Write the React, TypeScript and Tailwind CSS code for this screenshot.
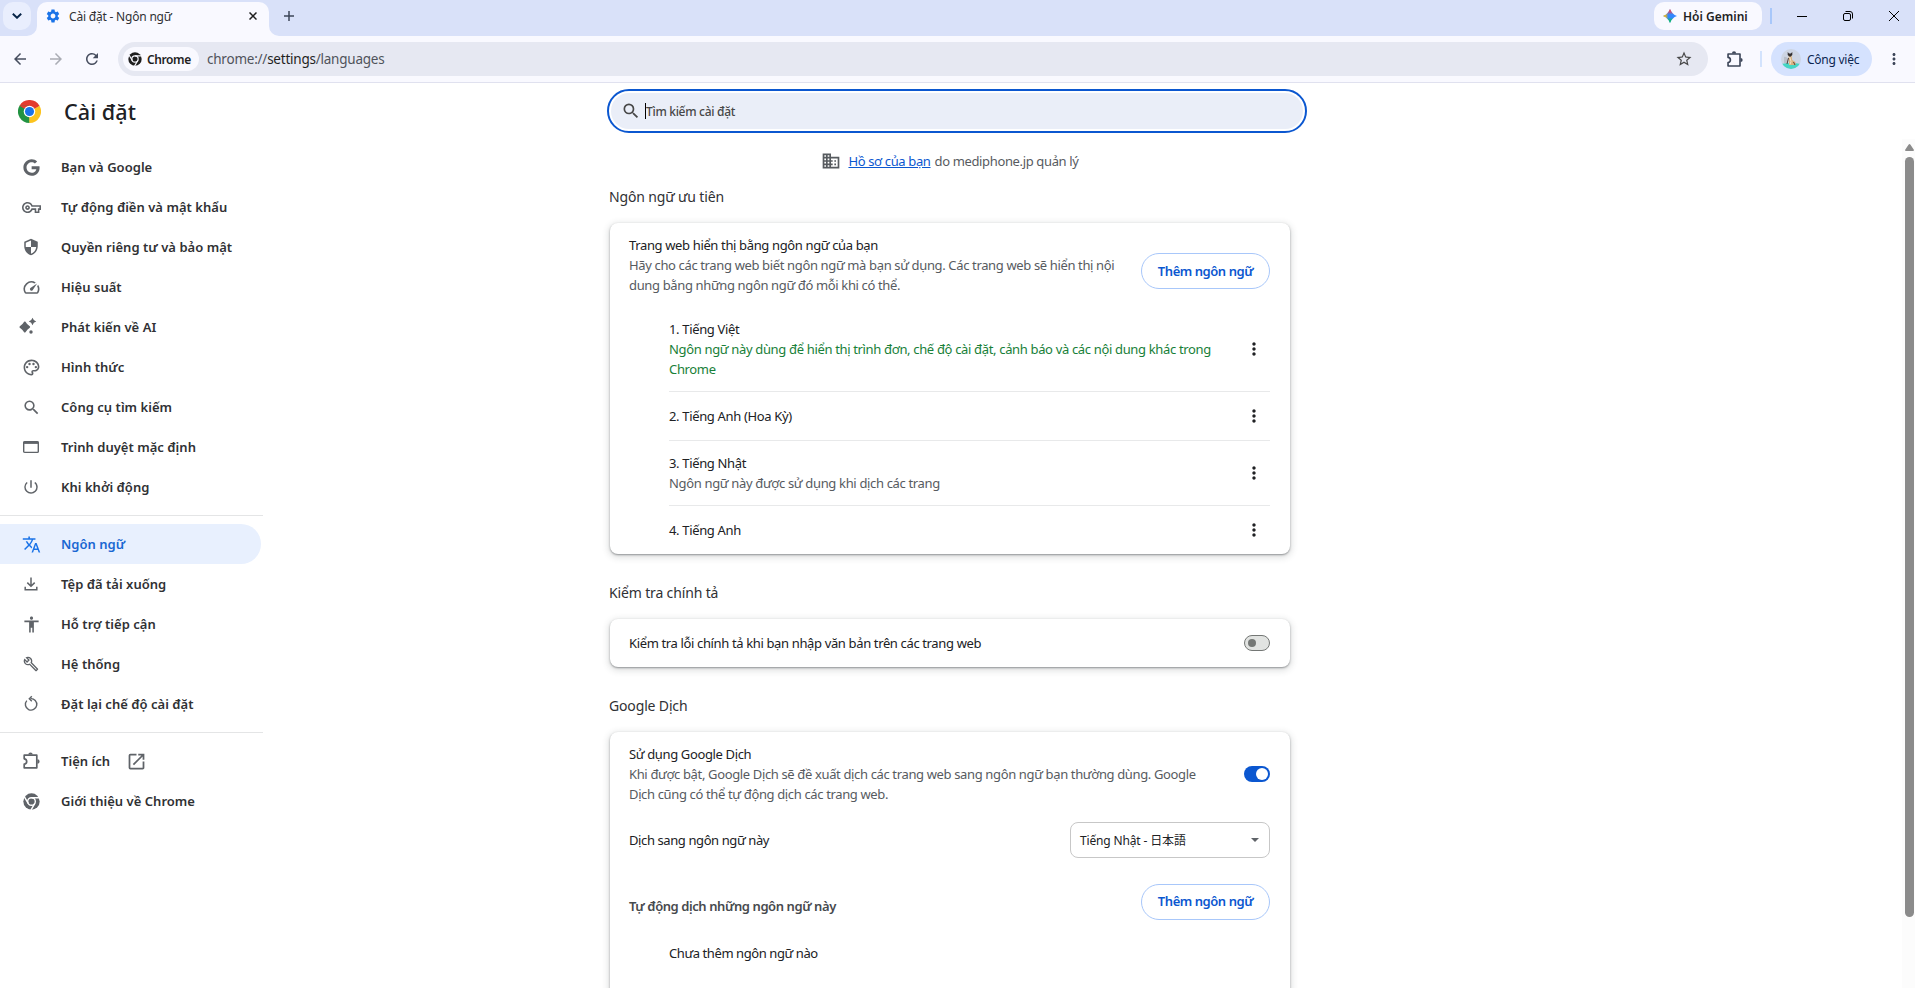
import React from 'react';
import {
    MdAccessibility,
    MdArrowBack,
    MdArrowForward,
    MdDomain,
    MdMoreVert,
    MdOpenInNew,
    MdOutlineBuild,
    MdOutlinePalette,
    MdOutlineSpeed,
    MdOutlineVpnKey,
    MdPowerSettingsNew,
    MdRefresh,
    MdSearch,
    MdSecurity,
    MdSettings,
    MdStarBorder,
    MdTranslate,
} from 'react-icons/md';
import {FaGoogle} from 'react-icons/fa';

const ChromeMono = ({className, gap}: { className: string, gap: string }) => (
    <svg viewBox="0 0 24 24" className={className}>
        <circle cx="12" cy="12" r="11.5" fill="currentColor"/>
        <g stroke={gap} strokeWidth="2" fill="none">
            <circle cx="12" cy="12" r="5.4"/>
            <path d="M12 6.6h11M7.3 14.7L1.8 5.2M16.7 14.7l-5.5 9.5"/>
        </g>
    </svg>
)

const ChromeColor = () => (
    <svg viewBox="0 0 48 48" className="w-[23px] h-[23px]">
        <path d="M24 24L3.2 12A24 24 0 0 1 44.8 12z" fill="#e33b2e"/>
        <path d="M24 24L44.8 12A24 24 0 0 1 24 48z" fill="#fcc31e"/>
        <path d="M24 24L24 48A24 24 0 0 1 3.2 12z" fill="#229342"/>
        <path d="M24 12h20.8L34 18z" fill="#e33b2e"/>
        <path d="M3.2 12l10.4 18L24 12z" fill="#229342"/>
        <path d="M3.2 12L13.6 18 24 12z" fill="#e33b2e"/>
        <path d="M34.4 30L24 48V30z" fill="#fcc31e"/>
        <circle cx="24" cy="24" r="12" fill="#fff"/>
        <circle cx="24" cy="24" r="9.5" fill="#1a73e8"/>
    </svg>
)

const Puzzle = ({className}: { className: string }) => (
    <svg viewBox="0 0 20 20" className={className} fill="none" stroke="currentColor" strokeWidth="1.7">
        <path d="M3.2 4.2h12.6v12.6H3.2v-3.6c1.6-.2 2.5-1.3 2.5-2.7S4.8 8 3.2 7.8z" strokeLinejoin="round"/>
        <path d="M7.3 3.6a2.2 2.2 0 0 1 4.4 0zM16.4 8.3a2.2 2.2 0 0 1 0 4.4z" fill="currentColor"
              stroke="none"/>
    </svg>
)

const Download = () => (
    <svg viewBox="0 0 20 20" className="w-5 h-5" fill="none" stroke="currentColor" strokeWidth="1.5">
        <path d="M10 3.5v8.5M6.3 8.6l3.7 3.7 3.7-3.7M4.2 12.8v3h11.6v-3"/>
    </svg>
)

const Sparks = () => (
    <svg viewBox="0 0 20 20" className="w-5 h-5 -ml-1" fill="currentColor">
        <path d="M5.8 5.2Q7.6 8.4 10.4 10 7.6 11.6 5.8 14.8 4 11.6 1.2 10 4 8.4 5.8 5.2z" stroke="currentColor"
              strokeWidth="1.5" strokeLinejoin="round"/>
        <path d="M13.5.8q.8 2.8 3.7 3.7-2.9.9-3.7 3.7-.8-2.8-3.7-3.7 2.9-.9 3.7-3.7z"/>
        <circle cx="12" cy="15" r="1.7"/>
    </svg>
)

const BrowserWindow = () => (
    <svg viewBox="0 0 20 20" className="w-5 h-5" fill="none" stroke="currentColor" strokeWidth="1.4">
        <rect x="2.7" y="4.7" width="14.6" height="10.7" rx="1"/>
        <path d="M2.5 5.7h15" strokeWidth="2.4"/>
    </svg>
)

const Reset = () => (
    <svg viewBox="0 0 20 20" className="w-5 h-5" fill="none" stroke="currentColor" strokeWidth="1.4">
        <path d="M9.5 4.7a5.7 5.7 0 1 1-3.7 1.9"/>
        <path d="M10.8 2.2L8.3 4.7l2.5 2.5"/>
    </svg>
)

const GeminiStar = () => (
    <svg viewBox="0 0 14 14" className="w-[14px] h-[14px]">
        <defs>
            <linearGradient id="gx" gradientUnits="userSpaceOnUse" x1="0" x2="14" y1="0" y2="0">
                <stop offset=".15" stopColor="#fbbc04"/>
                <stop offset=".38" stopColor="#fbbc04" stopOpacity="0"/>
            </linearGradient>
            <linearGradient id="gy" gradientUnits="userSpaceOnUse" x1="0" x2="0" y1="0" y2="14">
                <stop offset=".12" stopColor="#fc413d"/>
                <stop offset=".4" stopColor="#fc413d" stopOpacity="0"/>
                <stop offset=".6" stopColor="#0ebc5f" stopOpacity="0"/>
                <stop offset=".85" stopColor="#0ebc5f"/>
            </linearGradient>
        </defs>
        {['#3186ff', 'url(#gx)', 'url(#gy)'].map((fill) => (
            <path key={fill} fill={fill} d="M7 0Q8.8 5.2 14 7 8.8 8.8 7 14 5.2 8.8 0 7 5.2 5.2 7 0z"/>
        ))}
    </svg>
)

const Avatar = () => (
    <svg viewBox="0 0 20 20" className="w-5 h-5 rounded-full">
        <rect width="20" height="20" fill="#cdd5e3"/>
        <path d="M3 8q2-1 4 2v4H3z" fill="#b9bfc9"/>
        <path d="M0 15q10-2 20 0V20H0z" fill="#45d6c4"/>
        <path d="M7.5 6h3l.7 5 3.3 2v3H8z" fill="#d9b380"/>
        <path d="M8.5 7l1.5 5.5-1 3" fill="none" stroke="#efe2cb"/>
        <path d="M6.7 3l1.3 1.5h1.8L11.3 3v3L9 8 6.7 6z" fill="#33302f"/>
        <path d="M7.5 9l-1.5 6M12.5 13l1.5 3" stroke="#54423a" fill="none"/>
    </svg>
)

const menu = [
    [
        {title: 'Bạn và Google', icon: <FaGoogle className="w-[17px] h-[17px]"/>},
        {title: 'Tự động điền và mật khẩu', icon: <MdOutlineVpnKey className="w-[19px] h-[19px]"/>},
        {title: 'Quyền riêng tư và bảo mật', icon: <MdSecurity className="w-[18px] h-[18px]"/>},
        {title: 'Hiệu suất', icon: <MdOutlineSpeed className="w-[19px] h-[19px]"/>},
        {title: 'Phát kiến về AI', icon: <Sparks/>},
        {title: 'Hình thức', icon: <MdOutlinePalette className="w-[19px] h-[19px]"/>},
        {title: 'Công cụ tìm kiếm', icon: <MdSearch className="w-[19px] h-[19px]"/>},
        {title: 'Trình duyệt mặc định', icon: <BrowserWindow/>},
        {title: 'Khi khởi động', icon: <MdPowerSettingsNew className="w-[18px] h-[18px]"/>},
    ],
    [
        {title: 'Ngôn ngữ', icon: <MdTranslate className="w-[19px] h-[19px]"/>, active: true},
        {title: 'Tệp đã tải xuống', icon: <Download/>},
        {title: 'Hỗ trợ tiếp cận', icon: <MdAccessibility className="w-[19px] h-[19px]"/>},
        {title: 'Hệ thống', icon: <MdOutlineBuild className="w-4 h-4"/>},
        {title: 'Đặt lại chế độ cài đặt', icon: <Reset/>},
    ],
    [
        {title: 'Tiện ích', icon: <Puzzle className="w-5 h-5"/>, external: true},
        {title: 'Giới thiệu về Chrome', icon: <ChromeMono className="w-[17px] h-[17px]" gap="#fff"/>},
    ],
]

const languages = [
    {
        title: '1. Tiếng Việt',
        note: 'Ngôn ngữ này dùng để hiển thị trình đơn, chế độ cài đặt, cảnh báo và các nội dung khác trong Chrome',
        green: true
    },
    {title: '2. Tiếng Anh (Hoa Kỳ)'},
    {title: '3. Tiếng Nhật', note: 'Ngôn ngữ này được sử dụng khi dịch các trang'},
    {title: '4. Tiếng Anh'},
]

//@ts-ignore
const MenuItem = ({el}) => (
    <div
        className={`flex items-center h-10 w-[261px] rounded-r-full ${el.active ? 'bg-[#e8f0fe] text-[#1a73e8]' : 'text-[#5f6368]'}`}>
        <span className="flex justify-center w-5 ml-[21px]">{el.icon}</span>
        <span
            className={`ml-5 pt-0.5 text-[13px] font-semibold tracking-[0.03px] whitespace-nowrap ${el.active ? 'text-[#1967d2]' : 'text-[#303134]'}`}>{el.title}</span>
        {el.external ? <MdOpenInNew className="w-[21px] h-[21px] ml-4"/> : ''}
    </div>
)

const AddButton = () => (
    <button
        className="shrink-0 w-[129px] h-9 rounded-full border border-[#a8c7fa] text-[#0b57d0] text-[13px] font-semibold tracking-[-0.45px] whitespace-nowrap">
        Thêm ngôn ngữ
    </button>
)

const Toggle = ({on}: { on?: boolean }) => (
    <div
        className={`flex items-center shrink-0 w-[26px] h-4 rounded-full ${on ? 'justify-end bg-[#0b57d0] pr-0.5' : 'bg-[#e1e3e1] border border-[#747775] pl-[3px]'}`}>
        <div className={`rounded-full ${on ? 'w-3 h-3 bg-white' : 'w-2 h-2 bg-[#747775]'}`}/>
    </div>
)

const Section = ({title, children}: { title: string, children: React.ReactNode }) => (
    <section>
        <h2 className="h-[65px] pt-[29px] -ml-px text-[14px] leading-5 tracking-[-0.15px] text-[#303134]">{title}</h2>
        <div
            className="rounded-lg bg-white shadow-[0_1px_2px_rgba(60,64,67,0.5),0_2px_6px_2px_rgba(60,64,67,0.15)]">{children}</div>
    </section>
)

const TopBar = () => (
    <header>
        {/* Tab strip */}
        <div className="flex h-9 bg-[#d9e1f9]">
            <div className="flex items-center justify-center w-7 h-7 mt-0.5 ml-[3px] rounded-[10px] bg-[#e9eefd]">
                <svg viewBox="0 0 10 6" className="w-[10px] h-[6px]" fill="none" stroke="#062447" strokeWidth="1.9">
                    <path d="M.8.8L5 4.8 9.2.8"/>
                </svg>
            </div>
            <div
                className="relative flex items-center w-[232px] h-[34px] mt-0.5 ml-[6px] pb-[6px] rounded-t-[10px] bg-[#f9f9ff]">
                <svg viewBox="0 0 10 10" className="absolute bottom-0 -left-[10px] w-[10px] h-[10px]">
                    <path d="M10 0v10H0A10 10 0 0 0 10 0z" fill="#f9f9ff"/>
                </svg>
                <svg viewBox="0 0 10 10" className="absolute bottom-0 -right-[10px] w-[10px] h-[10px]">
                    <path d="M0 0v10h10A10 10 0 0 1 0 0z" fill="#f9f9ff"/>
                </svg>
                <MdSettings className="w-4 h-4 ml-2 text-[#1a73e8]"/>
                <span className="ml-2 pt-px text-[12px] tracking-[-0.2px] text-[#303134]">Cài đặt - Ngôn ngữ</span>
                <svg viewBox="0 0 8 8" className="w-2 h-2 ml-auto mr-3" stroke="#1f1f1f" strokeWidth="1.5">
                    <path d="M.5.5l7 7M7.5.5l-7 7"/>
                </svg>
            </div>
            <svg viewBox="0 0 10 10" className="w-[10px] h-[10px] mt-[11px] ml-[15px]" stroke="#3c4558"
                 strokeWidth="1.5">
                <path d="M5 0v10M0 5h10"/>
            </svg>
            <div className="flex items-center w-[108px] h-7 mt-0.5 ml-auto pl-[9px] rounded-[10px] bg-[#f9f9ff]">
                <GeminiStar/>
                <span className="ml-[6px] pt-px text-[12px] font-semibold tracking-[0px] text-[#1f1f1f]">Hỏi Gemini</span>
            </div>
            <div className="w-0.5 h-4 mt-2 ml-2 bg-[#a8c7fa]"/>
            <div className="flex items-center h-8 ml-[25px]">
                <div className="w-[10px] h-px bg-black"/>
                <svg viewBox="0 0 10 10" className="w-[10px] h-[10px] ml-9" fill="none" stroke="#000">
                    <rect x=".5" y="2.5" width="7" height="7" rx="1.5"/>
                    <path d="M2.5.5H7A2.5 2.5 0 0 1 9.5 3v4.5"/>
                </svg>
                <svg viewBox="0 0 10 10" className="w-[10px] h-[10px] ml-9 mr-4" stroke="#000">
                    <path d="M0 0l10 10M10 0L0 10"/>
                </svg>
            </div>
        </div>
        {/* Toolbar */}
        <div className="flex items-center h-[47px] bg-[#f9f9ff] border-b border-[#e0e1ef]">
            <MdArrowBack className="w-[18px] h-[18px] ml-[11px] text-[#474e5f]"/>
            <MdArrowForward className="w-[18px] h-[18px] ml-[18px] text-[#aaacb4]"/>
            <MdRefresh className="w-[18px] h-[18px] ml-[18px] text-[#474e5f]"/>
            <div className="flex items-center w-[1590px] h-[34px] ml-[17px] pl-[5px] rounded-full bg-[#e6e8f2]">
                <div className="flex items-center w-[76px] h-6 pl-[5px] rounded-full bg-[#f9f9ff] text-[#1f1f1f]">
                    <ChromeMono className="w-[14px] h-[14px]" gap="#f9f9ff"/>
                    <span className="ml-[5px] pt-px text-[12px] font-semibold tracking-[-0.4px]">Chrome</span>
                </div>
                <span className="ml-2 pt-px text-[13.5px] tracking-[-0.23px] text-[#50535b]">chrome://<span
                    className="text-[#1f1f1f]">settings</span>/languages</span>
                <MdStarBorder className="w-[18px] h-[18px] ml-auto mr-[15px] text-[#474747]"/>
            </div>
            <Puzzle className="w-[19px] h-[19px] ml-[17px] text-[#3c4558]"/>
            <div className="w-0.5 h-4 ml-4 bg-[#d3e3fd]"/>
            <div className="flex items-center w-[101px] h-[34px] ml-[9px] pl-[10px] rounded-full bg-[#d5e2fe]">
                <Avatar/>
                <span className="ml-[6px] pt-0.5 text-[12px] tracking-[-0.25px] text-[#0a2550]">Công việc</span>
            </div>
            <MdMoreVert className="w-[18px] h-[18px] ml-[13px] text-[#3c4558]"/>
        </div>
    </header>
)

export default function App() {
    return (
        <div
            className="flex flex-col w-[1915px] h-[988px] overflow-hidden bg-white font-['Noto_Sans','Noto_Sans_CJK_JP',sans-serif]">
            <TopBar/>
            <div className="flex flex-1 min-h-0">
                {/* Sidebar */}
                <aside className="w-[600px] shrink-0">
                    <div className="flex items-center h-14 pl-[18px]">
                        <ChromeColor/>
                        <h1 className="ml-[23px] pt-0.5 text-[21.5px] font-medium tracking-[0.1px] text-[#202124]">Cài đặt</h1>
                    </div>
                    <nav className="w-[263px] pt-2">
                        {menu.map((group, i) => (
                            <div key={i} className={i ? 'mt-2 pt-2 border-t border-[#e4e5e6]' : ''}>
                                {group.map((el) => <MenuItem key={el.title} el={el}/>)}
                            </div>
                        ))}
                    </nav>
                </aside>

                <main className="w-[707px] shrink-0 pl-[7px] pt-[6px] overflow-hidden">
                    <div className="w-[700px] h-11 p-0.5 rounded-full border-2 border-[#0b57d0]">
                        <div className="flex items-center h-full pl-[10px] rounded-full bg-[#eaeef8]">
                            <MdSearch className="w-5 h-5 text-[#474747]"/>
                            <div className="w-px h-4 ml-1 bg-black"/>
                            <span
                                className="pt-0.5 text-[12px] font-medium tracking-[-0.3px] text-[#474747]">Tìm kiếm cài đặt</span>
                        </div>
                    </div>

                    <div className="w-[683px] pl-[3px]">
                        <div
                            className="flex items-center justify-center h-5 mt-[18px] -mb-[13px] text-[13px] tracking-[-0.36px] text-[#575b5f]">
                            <MdDomain className="w-5 h-5 mr-[7px]"/>
                            <a className="mr-1 pt-0.5 text-[#0b57d0] underline">Hồ sơ của bạn</a>
                            <span className="pt-0.5">do mediphone.jp quản lý</span>
                        </div>

                        <Section title="Ngôn ngữ ưu tiên">
                            <div className="flex h-[84px] py-3 pl-[19px] pr-5 text-[13px] leading-5 tracking-[-0.36px]">
                                <div className="w-[500px] whitespace-nowrap text-[#575b5f]">
                                    <div className="text-[#202124]">Trang web hiển thị bằng ngôn ngữ của bạn</div>
                                    <div>Hãy cho các trang web biết ngôn ngữ mà bạn sử dụng. Các trang web sẽ hiển thị nội</div>
                                    <div>dung bằng những ngôn ngữ đó mỗi khi có thể.</div>
                                </div>
                                <div className="ml-auto pt-[18px]"><AddButton/></div>
                            </div>
                            <div className="ml-[59px] mr-5 text-[13px] leading-5 tracking-[-0.34px]">
                                {languages.map((el, i) => (
                                    <div key={el.title}
                                         className={`flex items-center ${i ? 'border-t border-[#e8e9ea]' : ''} ${el.note ? 'py-3' : 'h-[49px]'}`}>
                                        <div className="w-[560px]">
                                            <div className="text-[#202124]">{el.title}</div>
                                            {el.note ? <div
                                                className={el.green ? 'text-[#188038]' : 'text-[#575b5f]'}>{el.note}</div> : ''}
                                        </div>
                                        <MdMoreVert className="w-5 h-5 ml-auto mr-[6px] text-[#202124]"/>
                                    </div>
                                ))}
                            </div>
                        </Section>

                        <Section title="Kiểm tra chính tả">
                            <div
                                className="flex items-center justify-between h-12 pl-[19px] pr-5 text-[13px] tracking-[-0.36px] text-[#202124]">
                                <span className="pt-0.5">Kiểm tra lỗi chính tả khi bạn nhập văn bản trên các trang web</span>
                                <Toggle/>
                            </div>
                        </Section>

                        <Section title="Google Dịch">
                            <div
                                className="flex items-center justify-between h-[84px] pl-[19px] pr-5 text-[13px] leading-5 tracking-[-0.36px]">
                                <div className="w-[580px] whitespace-nowrap text-[#575b5f]">
                                    <div className="text-[#202124]">Sử dụng Google Dịch</div>
                                    <div>Khi được bật, Google Dịch sẽ đề xuất dịch các trang web sang ngôn ngữ bạn thường dùng. Google</div>
                                    <div>Dịch cũng có thể tự động dịch các trang web.</div>
                                </div>
                                <Toggle on/>
                            </div>
                            <div
                                className="flex items-center justify-between h-12 pl-[19px] pr-5 text-[13px] tracking-[-0.4px] text-[#202124]">
                                <span className="pt-0.5">Dịch sang ngôn ngữ này</span>
                                <div
                                    className="flex items-center justify-between w-[200px] h-9 pl-[9px] pr-[10px] rounded-lg border border-[#c7c7c7] text-[12px] tracking-[-0.15px]">
                                    <span className="pt-0.5">Tiếng Nhật - 日本語</span>
                                    <svg viewBox="0 0 8 4" className="w-2 h-1" fill="#5f6368">
                                        <path d="M0 0h8L4 4z"/>
                                    </svg>
                                </div>
                            </div>
                            <div className="flex justify-between h-16 pt-5 pl-[19px] pr-5">
                                <span
                                    className="pt-3 text-[13px] leading-5 font-semibold tracking-[-0.42px] text-[#474a4e]">Tự động dịch những ngôn ngữ này</span>
                                <AddButton/>
                            </div>
                            <div className="pb-20 pl-[59px] text-[13px] leading-[50px] tracking-[-0.42px] text-[#202124]">
                                Chưa thêm ngôn ngữ nào
                            </div>
                        </Section>
                    </div>
                </main>

                {/* Scrollbar */}
                <div className="flex flex-col items-center w-[13px] mt-14 ml-auto bg-[#fcfcfc]">
                    <svg viewBox="0 0 9 7" className="w-[9px] h-[7px] mt-[5px] ml-0.5" fill="#8b8b8b">
                        <path d="M4.5 0Q5 0 5.5.8L9 6q0 1-1 1H1Q0 7 0 6L3.5.8Q4 0 4.5 0z"/>
                    </svg>
                    <div className="w-[9px] h-[760px] mt-[6px] ml-0.5 rounded-full bg-[#8b8b8b]"/>
                </div>
            </div>
        </div>
    );
}
